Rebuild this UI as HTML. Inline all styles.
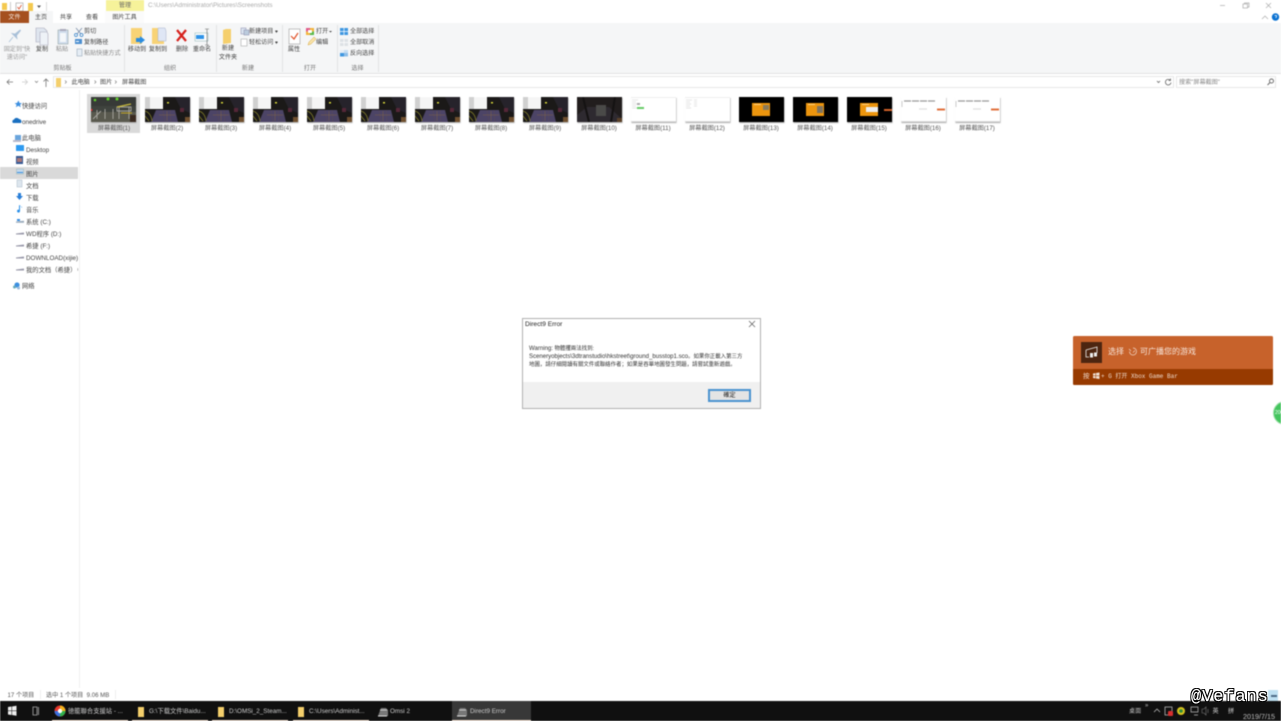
<!DOCTYPE html>
<html lang="zh"><head><meta charset="utf-8"><title>Screenshots</title>
<style>
html,body{margin:0;padding:0;width:1281px;height:721px;overflow:hidden;background:#fff}
#r{position:absolute;left:0;top:0;width:1281px;height:721px;overflow:hidden;filter:blur(.4px);font-family:"Liberation Sans","Noto Sans CJK SC",sans-serif;font-size:6.1px;line-height:9px;color:#444}
#r div,#r span.a,#r svg{position:absolute}
.t{white-space:nowrap}
.c{text-align:center;white-space:nowrap}
.g{color:#777}
.lab{width:54px;top:124px;text-align:center;color:#555;white-space:nowrap;font-size:6.2px}
.th{top:96.500px;width:45px;height:25px;box-shadow:.5px 1px 1px #aaa}
.nav{color:#444;white-space:nowrap;font-size:6.300px;margin-top:.5px}
.tb{top:707px;color:#ccc;white-space:nowrap;font-size:6.300px}
.u{top:719.500px;height:1.500px;background:#f5e3d4}
.l{font-size:6.050px}
#wm{position:absolute;left:1191px;top:689px;white-space:nowrap;font-family:'Liberation Mono',monospace;font-size:17px;line-height:17px;color:#fff;letter-spacing:.9px;-webkit-text-stroke:.2px #fff;text-shadow:1px 0 #000,-1px 0 #000,0 1px #000,0 -1px #000,1px 1px #000,-1px -1px #000,1px -1px #000,-1px 1px #000}
</style></head><body><div id="r">

<!-- title bar -->
<svg style="left:0;top:0" width="140" height="12">
<path d="M2 3h5v7H2z" fill="#f4c94f"/><rect x="10" y="2" width="1" height="9" fill="#ccc"/>
<rect x="16" y="3" width="7" height="8" fill="#fff" stroke="#999" stroke-width=".6"/><path d="M17.500 7l1.500 2 2.500-4" stroke="#d9502e" fill="none" stroke-width=".8"/>
<path d="M28 3h5v8h-5z" fill="#f4c94f"/><path d="M37 5.500h4l-2 2.500z" fill="#555"/>
<rect x="46" y="2" width="1" height="9" fill="#ddd"/>
</svg>
<div style="left:106px;top:0;width:38px;height:11px;background:#f6f29a"></div>
<div class="c" style="left:106px;top:1px;width:38px;color:#666">管理</div>
<div class="t" style="left:148px;top:1px;color:#aaa;font-size:6.300px">C:\Users\Administrator\Pictures\Screenshots</div>
<svg style="left:1210px;top:0" width="71" height="12" fill="none" stroke="#aaa" stroke-width=".7">
<path d="M10 5.500h5"/><rect x="33" y="4" width="4.500" height="4"/><path d="M34.500 4V3h4.500v4h-1.500"/><path d="M56 3l5 5M61 3l-5 5"/>
</svg>

<!-- tabs -->
<div style="left:0;top:11px;width:29px;height:12px;background:#a5501f"></div>
<div class="c" style="left:0;top:12.500px;width:29px;color:#f5e8df">文件</div>
<div style="left:29px;top:11px;width:24px;height:13px;background:#f5f6f7"></div>
<div class="c" style="left:29px;top:13px;width:24px">主页</div>
<div class="c" style="left:53px;top:13px;width:26px">共享</div>
<div class="c" style="left:79px;top:13px;width:26px">查看</div>
<div style="left:105px;top:11px;width:39px;height:13px;background:#fbfbfb"></div>
<div class="c" style="left:105px;top:13px;width:39px">图片工具</div>
<svg style="left:1260px;top:12px" width="21" height="11">
<path d="M2 7l3-3 3 3" fill="none" stroke="#aaa" stroke-width=".7"/>
<circle cx="15.500" cy="5" r="3.700" fill="#0a72d2"/><path d="M14.500 3.500h2v1.500l-1 .8" stroke="#fff" fill="none" stroke-width=".7"/>
</svg>

<!-- ribbon -->
<div style="left:0;top:23px;width:1281px;height:50px;background:#f5f6f7;border-bottom:1px solid #e3e3e3"></div>
<div style="left:124px;top:25px;width:1px;height:47px;background:#e2e3e4"></div>
<div style="left:216px;top:25px;width:1px;height:47px;background:#e2e3e4"></div>
<div style="left:282px;top:25px;width:1px;height:47px;background:#e2e3e4"></div>
<div style="left:337px;top:25px;width:1px;height:47px;background:#e2e3e4"></div>
<div style="left:378px;top:25px;width:1px;height:47px;background:#e2e3e4"></div>

<svg style="left:0;top:24px" width="380" height="36">
<path d="M20 6l-5 4-3-.5 5 5 -.500-3 4-5zM13 13l-4 5" fill="#a9c0d8" stroke="#a9c0d8" stroke-width=".8"/>
<path d="M36 4h8l3 3v11H36z" fill="#dfe6ef" stroke="#aab" stroke-width=".6"/><path d="M40 8h7l1 2v11H40z" fill="#eef2f7" stroke="#aab" stroke-width=".6"/>
<rect x="58" y="6" width="10" height="14" fill="#cfdcec" stroke="#9aa" stroke-width=".6"/><rect x="60" y="5" width="6" height="2" fill="#aab"/><rect x="60" y="9" width="6" height="9" fill="#f4f7fa"/>
<path d="M76 4l5 6M82 4l-5 6" stroke="#7b8ea8" stroke-width=".8"/><circle cx="76" cy="11" r="1.500" fill="none" stroke="#2f7fc8" stroke-width=".7"/><circle cx="81.500" cy="11" r="1.500" fill="none" stroke="#2f7fc8" stroke-width=".7"/>
<rect x="75" y="15" width="7" height="5" fill="#4c8fd0"/><rect x="76" y="17" width="3" height="1" fill="#fff"/>
<rect x="77" y="25" width="5" height="7" fill="#e6edf5" stroke="#9ab" stroke-width=".6"/>
<path d="M131 4h11v16h-11z" fill="#f8d376"/><path d="M145 16l-5 4v-2h-4v-4h4v-2z" fill="#2a8ce0"/>
<path d="M152 4h12v16h-12z" fill="#f8d376"/><path d="M158 4h7l1 3v10h-8z" fill="#dfe6f5" stroke="#a8b4cc" stroke-width=".5"/>
<path d="M177 6l9 11M186 6l-9 11" stroke="#d6211c" stroke-width="2.200" fill="none"/>
<rect x="195" y="9" width="13" height="8" fill="#fff" stroke="#9bb" stroke-width=".6"/><rect x="196" y="11" width="8" height="4" fill="#2f93e8"/><path d="M207 5v16M205 5h4M205 21h4" stroke="#666" stroke-width=".6" fill="none"/>
<path d="M223 6l3-1h5v14l-8 1z" fill="#f5cf6c"/>
<rect x="241" y="4" width="5" height="6" fill="#dbe5f1" stroke="#88a" stroke-width=".5"/><rect x="244" y="6" width="5" height="5" fill="#bcd" stroke="#88a" stroke-width=".5"/>
<rect x="241" y="15" width="6" height="7" fill="#fff" stroke="#999" stroke-width=".5"/>
<path d="M275 7h3l-1.500 1.500zM275 18h3l-1.500 1.500z" fill="#444"/>
<rect x="289" y="5" width="11" height="15" fill="#fff" stroke="#aaa" stroke-width=".7"/><path d="M291 12l3 3 4-6" fill="none" stroke="#e0532a" stroke-width="1.200"/>
<rect x="306" y="4" width="8" height="7" fill="#f2b33a"/><rect x="306" y="4" width="4" height="3.500" fill="#e05a8a"/><rect x="310" y="7.500" width="4" height="3.500" fill="#56b848"/><rect x="308" y="6" width="4" height="3" fill="#fff"/>
<path d="M329 7h3l-1.500 1.500z" fill="#444"/>
<path d="M308 21l1-3 5-5 2 2-5 5z" fill="#f7e2a8" stroke="#d9a83c" stroke-width=".5"/>
<rect x="340" y="4" width="8" height="7" fill="#3f97e0"/><path d="M344 4v7M340 7.500h8" stroke="#fff" stroke-width=".7"/>
<rect x="340" y="15" width="8" height="7" fill="#dde1e5"/><path d="M344 15v7M340 18.500h8" stroke="#fff" stroke-width=".7"/>
<rect x="340" y="29" width="4" height="3.500" fill="#3f97e0"/><rect x="344" y="26" width="4" height="3" fill="#c4dcf2"/><rect x="340" y="26" width="4" height="3" fill="#e4edf6" /><rect x="344" y="29" width="4" height="3.500" fill="#8dbde8"/>
</svg>

<div class="c g" style="left:0;top:45px;width:34px;line-height:8px;color:#999;margin-top:.5px">固定到"快<br>速访问"</div>
<div class="c" style="left:33px;top:45px;width:18px">复制</div>
<div class="c g" style="left:53px;top:45px;width:18px;color:#888">粘贴</div>
<div class="t" style="left:84px;top:27px">剪切</div>
<div class="t" style="left:84px;top:38px">复制路径</div>
<div class="t g" style="left:84px;top:49px;color:#888">粘贴快捷方式</div>
<div class="c g" style="left:40px;top:64px;width:45px">剪贴板</div>
<div class="c" style="left:125px;top:45px;width:24px">移动到</div>
<div class="c" style="left:146px;top:45px;width:24px">复制到</div>
<div class="c" style="left:172px;top:45px;width:20px">删除</div>
<div class="c" style="left:192px;top:45px;width:20px">重命名</div>
<div class="c g" style="left:150px;top:64px;width:40px">组织</div>
<div class="c" style="left:217px;top:45px;width:22px;line-height:8.500px">新建<br>文件夹</div>
<div class="t" style="left:249px;top:27px">新建项目 <span style="font-size:5px">▾</span></div>
<div class="t" style="left:249px;top:38px">轻松访问 <span style="font-size:5px">▾</span></div>
<div class="c g" style="left:228px;top:64px;width:40px">新建</div>
<div class="c" style="left:284px;top:45px;width:20px">属性</div>
<div class="t" style="left:316px;top:27px">打开</div>
<div class="t" style="left:316px;top:38px">编辑</div>
<div class="c g" style="left:290px;top:64px;width:40px">打开</div>
<div class="t" style="left:350px;top:27px">全部选择</div>
<div class="t" style="left:350px;top:38px">全部取消</div>
<div class="t" style="left:350px;top:49px">反向选择</div>
<div class="c g" style="left:337px;top:64px;width:41px">选择</div>

<!-- address bar -->
<svg style="left:0;top:75px" width="120" height="15" fill="none" stroke="#777" stroke-width=".8">
<path d="M13 7H7M9.500 4.500L7 7l2.500 2.500"/>
<path d="M27 7h-5M25 4.500L27.500 7 25 9.500" stroke="#ccc"/>
<path d="M35 6l1.500 1.500L38 6" stroke="#888"/>
<path d="M46 12V4M43.500 6.500L46 4l2.500 2.500"/>
<path d="M56 3h5v9h-5z" fill="#f4cf6c" stroke="none"/>
<path d="M65 5.500l1.500 1.500L65 8.500M94.500 5.500L96 7l-1.500 1.500M115 5.500l1.500 1.500L115 8.500" stroke="#777" stroke-width=".6"/>
</svg>
<div style="left:53px;top:76px;width:1121px;height:12px;border:1px solid #e8e8e8;box-sizing:border-box"></div>
<div class="t" style="left:71.500px;top:78px">此电脑</div>
<div class="t" style="left:100px;top:78px">图片</div>
<div class="t" style="left:122px;top:78px">屏幕截图</div>
<svg style="left:1155px;top:76px" width="20" height="12" fill="none" stroke="#666" stroke-width=".8">
<path d="M2 5l1.500 1.500L5 5"/><path d="M15 4a2.800 2.800 0 1 0 1 2.500M15.500 2.500V4.500H13.500"/>
</svg>
<div style="left:1176px;top:76px;width:100px;height:12px;border:1px solid #e8e8e8;box-sizing:border-box"></div>
<div class="t" style="left:1179px;top:78px;color:#888">搜索"屏幕截图"</div>
<svg style="left:1266px;top:77px" width="9" height="10" fill="none" stroke="#666" stroke-width=".9"><circle cx="5.500" cy="4" r="2"/><path d="M4 5.500L1.500 8"/></svg>

<!-- nav pane -->
<div style="left:79px;top:90px;width:1px;height:598px;background:#f0f0f0"></div>
<div style="left:0;top:167px;width:78px;height:12px;background:#d9d9d9"></div>
<svg style="left:10px;top:98px" width="18" height="195">
<path d="M5 5l1.500-2.500 1 2.500 2.500.200-2 1.500 .8 2.500-2.500-1.500-2.500 1.500.8-2.500-2-1.500z" transform="translate(2 0)" fill="#3c8fe0"/>
<path d="M3 25a2 2 0 0 1 1-3.500 3 3 0 0 1 5-.5 2.500 2.500 0 0 1 2 4z" fill="#1a6fc0"/>
<rect x="5" y="37" width="6" height="5" fill="#6aa5dc"/><rect x="3" y="42" width="8" height="2" fill="#bbc"/>
<rect x="6" y="47" width="8" height="6" rx=".5" fill="#2e9af0"/>
<rect x="6" y="58" width="7" height="8" fill="#345a96"/><rect x="7" y="60" width="5" height="4" fill="#a77"/>
<rect x="6.500" y="71" width="7" height="5" fill="#c5d9ec" stroke="#8aa" stroke-width=".4"/><rect x="7" y="74" width="6" height="1" fill="#3c8fe0"/>
<rect x="7" y="82" width="5" height="7" fill="#dde6ee" stroke="#9ab" stroke-width=".4"/>
<path d="M8 95h3v3h2l-3.500 4L6 98h2z" fill="#2a7fd8"/>
<path d="M10 107v6a1.500 1.500 0 1 1-1-1.300V107l3 2v1z" fill="#2a8fe8"/>
<path d="M6 123.500l8-.8v2H6z" fill="#9ab"/><rect x="7" y="121" width="3" height="2" fill="#3c8fe0"/>
<path d="M6 135.500l8-1v2H6z" fill="#99a"/><path d="M6 147.500l8-1v2H6z" fill="#99a"/><path d="M6 159.500l8-1v2H6z" fill="#99a"/><path d="M6 171.500l8-1v2H6z" fill="#99a"/>
<circle cx="7" cy="187" r="2.600" fill="#3c8fe0"/><circle cx="4.500" cy="189" r="1.500" fill="#6ab"/><circle cx="8.500" cy="190" r="1.500" fill="#9bd"/>
</svg>
<div class="nav" style="left:22px;top:101px">快捷访问</div>
<div class="nav" style="left:22px;top:117px">onedrive</div>
<div class="nav" style="left:22px;top:133px">此电脑</div>
<div class="nav" style="left:26px;top:145px">Desktop</div>
<div class="nav" style="left:26px;top:157px">视频</div>
<div class="nav" style="left:26px;top:169px">图片</div>
<div class="nav" style="left:26px;top:181px">文档</div>
<div class="nav" style="left:26px;top:193px">下载</div>
<div class="nav" style="left:26px;top:205px">音乐</div>
<div class="nav" style="left:26px;top:217px">系统 (C:)</div>
<div class="nav" style="left:26px;top:229px">WD程序 (D:)</div>
<div class="nav" style="left:26px;top:241px">希捷 (F:)</div>
<div class="nav" style="left:26px;top:253px;width:52px;overflow:hidden">DOWNLOAD(xijie)</div>
<div class="nav" style="left:26px;top:265px;width:52px;overflow:hidden">我的文档（希捷）（</div>
<div class="nav" style="left:22px;top:281px">网络</div>

<!-- thumbnails -->
<svg width="0" height="0" style="left:0;top:0">
<defs>
<g id="bus">
<rect width="45" height="25" fill="#1b1918"/>
<path d="M6 25L11 13H30L33 25z" fill="#4c4466"/>
<path d="M18 13L20 25M25 13L26 25" stroke="#5a4a58" stroke-width=".5"/>
<path d="M22 14v10M14 18h16" stroke="#8a6a40" stroke-width=".4"/>
<path d="M0 14q6 2 7 10M0 19l4 5" stroke="#86822a" stroke-width=".8" fill="none"/>
<rect x="22" y="5" width="2" height="1.500" fill="#d8d83a"/>
<path d="M30 0l6 12 9 4V0z" fill="#26232b"/>
<rect x="35" y="11" width="4" height="4" fill="#552638"/><rect x="40" y="20" width="5" height="5" fill="#70502e"/>
<rect width="18" height="12" fill="#f5f5f5"/><rect width="5" height="12" fill="#d0d0d0"/>
</g>
<g id="orange">
<rect width="45" height="25" fill="#000"/><rect x="13" y="6" width="18" height="13" fill="#ec950e"/><rect x="15" y="7" width="7" height="1" fill="#ffd080"/>
</g>
<g id="white1">
<rect width="45" height="25" fill="#fff"/><rect x="0" y="0" width="45" height="1" fill="#eee"/><rect y="24" width="45" height="1" fill="#ddd"/>
<path d="M1 3h6M1 5h4M1 7h5M1 9h4M1 11h5" stroke="#ccc" stroke-width=".5"/>
</g>
<g id="white2">
<rect width="45" height="25" fill="#fff"/><rect y="24" width="45" height="1" fill="#ddd"/><path d="M3 4h32" stroke="#999" stroke-width="1.300" stroke-dasharray="7 1"/><path d="M18 12h8" stroke="#ddd" stroke-width="1.200"/><rect x="36" y="11.500" width="8" height="2" fill="#e0703c"/><path d="M1 4v6" stroke="#ccc"/>
</g>
</defs>
</svg>
<div style="left:87px;top:94px;width:53px;height:39px;background:#d9d9d9"></div>

<svg class="th" style="left:91px" width="45" height="25">
<rect width="45" height="25" fill="#3f433e"/><rect y="0" width="45" height="9" fill="#373a37"/>
<rect y="15" width="45" height="10" fill="#59594e"/>
<path d="M2 22L10 14M6 13v9M14 12v10M22 12v10M26 10h14v4H26zM28 10v12M38 10v12" stroke="#a9a8a2" stroke-width=".9" fill="none"/>
<path d="M26 10l14-3" stroke="#c6b83c" stroke-width="1.300"/><path d="M30 16h11" stroke="#c4a828" stroke-width="1"/>
<circle cx="4" cy="3" r="1.300" fill="#5fd02e"/><circle cx="17" cy="2" r="1.500" fill="#5fd02e"/><circle cx="26" cy="2" r="1.500" fill="#5fd02e"/>
<rect x="39" y="18" width="6" height="7" fill="#3a2a20"/><rect x="0" y="12" width="1.500" height="2" fill="#d03030"/>
</svg>
<svg class="th" style="left:145px" width="45" height="25"><use href="#bus"/></svg>
<svg class="th" style="left:199px" width="45" height="25"><use href="#bus"/></svg>
<svg class="th" style="left:253px" width="45" height="25"><use href="#bus"/></svg>
<svg class="th" style="left:307px" width="45" height="25"><use href="#bus"/></svg>
<svg class="th" style="left:361px" width="45" height="25"><use href="#bus"/></svg>
<svg class="th" style="left:415px" width="45" height="25"><use href="#bus"/></svg>
<svg class="th" style="left:469px" width="45" height="25"><use href="#bus"/></svg>
<svg class="th" style="left:523px" width="45" height="25"><use href="#bus"/></svg>
<svg class="th" style="left:577px" width="45" height="25"><rect width="45" height="25" fill="#211d1d"/><path d="M0 25V18L10 10H32L45 22V25z" fill="#2e2a30"/><path d="M6 0L12 25M38 0L34 25" stroke="#141212" stroke-width="2"/><rect x="19" y="8" width="10" height="11" fill="#4a4a48"/><rect x="40" y="21" width="5" height="4" fill="#5a4028"/></svg>
<svg class="th" style="left:631px" width="45" height="25"><use href="#white1"/><rect x="6" y="10" width="7" height="2" fill="#66cc66"/><rect x="6" y="6" width="3" height="2" fill="#aaa"/></svg>
<svg class="th" style="left:685px" width="45" height="25"><use href="#white1"/><path d="M9 3h3M9 5h3M9 7h3M9 9h3" stroke="#ccc" stroke-width=".5"/></svg>
<svg class="th" style="left:739px" width="45" height="25"><use href="#orange"/><rect x="24" y="8" width="6" height="5" fill="#8a7a5a"/></svg>
<svg class="th" style="left:793px" width="45" height="25"><use href="#orange"/><rect x="24" y="9" width="6" height="7" fill="#7f7460"/></svg>
<svg class="th" style="left:847px" width="45" height="25"><use href="#orange"/><rect x="19" y="10" width="12" height="5" fill="#eee"/><rect x="37" y="12" width="8" height="2" fill="#d2622a"/></svg>
<svg class="th" style="left:901px" width="45" height="25"><use href="#white2"/></svg>
<svg class="th" style="left:955px" width="45" height="25"><use href="#white2"/></svg>

<div class="lab" style="left:87px">屏幕截图(1)</div>
<div class="lab" style="left:140px">屏幕截图(2)</div>
<div class="lab" style="left:194px">屏幕截图(3)</div>
<div class="lab" style="left:248px">屏幕截图(4)</div>
<div class="lab" style="left:302px">屏幕截图(5)</div>
<div class="lab" style="left:356px">屏幕截图(6)</div>
<div class="lab" style="left:410px">屏幕截图(7)</div>
<div class="lab" style="left:464px">屏幕截图(8)</div>
<div class="lab" style="left:518px">屏幕截图(9)</div>
<div class="lab" style="left:572px">屏幕截图(10)</div>
<div class="lab" style="left:626px">屏幕截图(11)</div>
<div class="lab" style="left:680px">屏幕截图(12)</div>
<div class="lab" style="left:734px">屏幕截图(13)</div>
<div class="lab" style="left:788px">屏幕截图(14)</div>
<div class="lab" style="left:842px">屏幕截图(15)</div>
<div class="lab" style="left:896px">屏幕截图(16)</div>
<div class="lab" style="left:950px">屏幕截图(17)</div>

<!-- dialog -->
<div style="left:522px;top:318px;width:239px;height:91px;box-sizing:border-box;border:1px solid #b0b0b0;background:#fff"></div>
<div style="left:523px;top:382px;width:237px;height:26px;background:#f0f0f0"></div>
<div class="t" style="left:525px;top:320px;color:#222;font-size:6.600px">Direct9 Error</div>
<svg style="left:747px;top:318.500px" width="10" height="10"><path d="M2 2l6 6M8 2l-6 6" stroke="#555" stroke-width=".7"/></svg>
<div class="t" style="left:529px;top:344.500px;color:#333;line-height:8px;font-size:5.450px"><span class="l">Warning:</span> 物體攫兩法找到:<br><span class="l">Sceneryobjects\3dtranstudio\hkstreet\ground_busstop1.sco</span>。如果你正載入第三方<br>地圖，請仔細閱讀有關文件或聯絡作者；如果是吞單地圖發生問題，請嘗試重新遊戲。</div>
<div style="left:708px;top:389px;width:43px;height:13px;box-sizing:border-box;border:2px solid #4a92cf;background:#e4e4e4"></div>
<div class="c" style="left:708px;top:391px;width:43px;color:#222">確定</div>

<!-- xbox -->
<div style="left:1073px;top:336px;width:200px;height:49px;background:#c7622b;border-radius:1.500px;overflow:hidden"></div>
<div style="left:1073px;top:369px;width:200px;height:16px;background:#973a00;border-radius:0 0 1.500px 1.500px"></div>
<div style="left:1081px;top:342px;width:21px;height:21px;background:#4d2510"></div>
<svg style="left:1081px;top:342px" width="21" height="21" fill="none" stroke="#eee" stroke-width=".8"><path d="M5 8l11-3v6M5 8v7h3"/><rect x="9" y="11" width="3" height="4.500" fill="#eee" stroke="none"/><rect x="13" y="10.500" width="3" height="4" fill="#eee" stroke="none"/></svg>
<div class="t" style="left:1108px;top:346px;color:#f7e5da;font-size:8px;line-height:11px">选择</div>
<svg style="left:1127px;top:346px" width="12" height="11" fill="none" stroke="#f3d8c8" stroke-width=".7"><path d="M6 2a3.500 3.500 0 1 1-3.500 3.500M2 3l2 2M8 4.500L6 6.500"/></svg>
<div class="t" style="left:1140px;top:346px;color:#f7e5da;font-size:8px;line-height:11px">可广播您的游戏</div>
<div class="t" style="left:1083px;top:372px;color:#f0dbcd;font-size:6.500px">按</div>
<svg style="left:1092px;top:372px" width="8" height="8" fill="#f0e0d4"><path d="M1 1.500l2.500-.4v2.400H1zM4 1l3.500-.5v3H4zM1 4h2.500v2.400L1 6zM4 4h3.500v3L4 6.500z"/></svg>
<div class="t" style="left:1101px;top:372px;color:#f0dbcd;font-size:6px;font-family:'Liberation Mono','Noto Sans CJK SC',monospace">+ G 打开 Xbox Game Bar</div>
<div style="left:1272.500px;top:401px;width:24px;height:24px;border-radius:50%;background:#44c55e;border:1px solid #9fe0aa;box-sizing:border-box"></div>
<div class="t" style="left:1275px;top:409px;color:#fff;font-size:5px">200</div>

<!-- status -->
<div class="t" style="left:7.500px;top:690.500px;color:#555">17 个项目</div>
<div style="left:40px;top:690px;width:1px;height:9px;background:#eee"></div>
<div class="t" style="left:46px;top:690.500px;color:#555">选中 1 个项目&nbsp; 9.06 MB</div>
<div style="left:115px;top:690px;width:1px;height:9px;background:#eee"></div>

<!-- taskbar -->
<div style="left:0;top:701px;width:1281px;height:20px;background:#101010"></div>
<div style="left:452px;top:701px;width:79px;height:20px;background:#383838"></div>
<div class="u" style="left:52px;width:76px"></div>
<div class="u" style="left:132px;width:76px"></div>
<div class="u" style="left:212px;width:76px"></div>
<div class="u" style="left:293px;width:76px"></div>
<div class="u" style="left:452px;width:79px"></div>
<svg style="left:0;top:701px" width="480" height="20">
<path d="M8 6l3.500-.5v4H8zM12 5.500l4.500-.7v4.700H12zM8 10h3.500v4L8 13.500zM12 10h4.500v4.700L12 14z" fill="#eee"/>
<path d="M33 6h4v8h-4zM38.500 6v8" fill="none" stroke="#aaa" stroke-width=".8"/>
<circle cx="60" cy="10" r="5.500" fill="#e9372d"/><path d="M60 10L60 4.500A5.500 5.500 0 0 1 65.500 10z" fill="#f2b21c"/><path d="M60 10h5.500A5.500 5.500 0 0 1 60 15.500z" fill="#2fb14c"/><path d="M60 10v5.500A5.500 5.500 0 0 1 54.500 10z" fill="#3a6fe0"/><circle cx="60" cy="10" r="2.200" fill="#fff"/>
<path d="M138 6h6v10h-6z" fill="#f4cf6c"/><path d="M218 6h6v10h-6z" fill="#f4cf6c"/><path d="M298 6h6v10h-6z" fill="#f4cf6c"/>
<path d="M378 15l3-8h5l2 2v6z" fill="#777"/><path d="M380 9h7" stroke="#ccc"/><path d="M378 15h9" stroke="#ddd"/>
<path d="M457 15l3-8h5l2 2v6z" fill="#777"/><path d="M459 9h7" stroke="#ccc"/><path d="M457 15h9" stroke="#ddd"/>
</svg>
<div class="tb" style="left:68px">徳籠聯合支援站 - ...</div>
<div class="tb" style="left:149px">G:\下载文件\Baidu...</div>
<div class="tb" style="left:229px">D:\OMSi_2_Steam...</div>
<div class="tb" style="left:309px">C:\Users\Administ...</div>
<div class="tb" style="left:390px">Omsi 2</div>
<div class="tb" style="left:470px">Direct9 Error</div>

<!-- tray -->
<div class="t" style="left:1129px;top:707px;color:#bbb">桌面</div>
<div class="t" style="left:1145px;top:702px;color:#bbb;font-size:6px">»</div>
<svg style="left:1150px;top:701px" width="85" height="20">
<path d="M4 11l3-3 3 3" fill="none" stroke="#ccc" stroke-width=".7"/>
<rect x="15" y="6" width="7" height="8" fill="none" stroke="#ccc" stroke-width=".7"/><rect x="18" y="10" width="5" height="5" rx="1" fill="#d62f2f"/>
<circle cx="31" cy="10" r="4" fill="#d5c21e"/><circle cx="31" cy="10" r="1.800" fill="#2d8a3b"/>
<path d="M41 6h7v5h-7zM44 14h4" fill="none" stroke="#bbb" stroke-width=".7"/>
<path d="M52 8h2l2-2v8l-2-2h-2zM58 8v4" fill="none" stroke="#777" stroke-width=".6"/>
</svg>
<div class="t" style="left:1212.500px;top:707px;color:#ddd">英</div>
<div class="t" style="left:1228px;top:707px;color:#ddd">拼</div>
<div class="t" style="left:1243px;top:711.500px;color:#bbb;font-size:7.200px">2019/7/15</div>
<div style="left:1268px;top:690px;width:10px;height:11px;background:#bfe0f2"></div>
<div style="left:1271px;top:695px;width:6px;height:2px;background:#4b6a86"></div>

</div>
<div id="wm">@Vefans</div>
</body></html>
